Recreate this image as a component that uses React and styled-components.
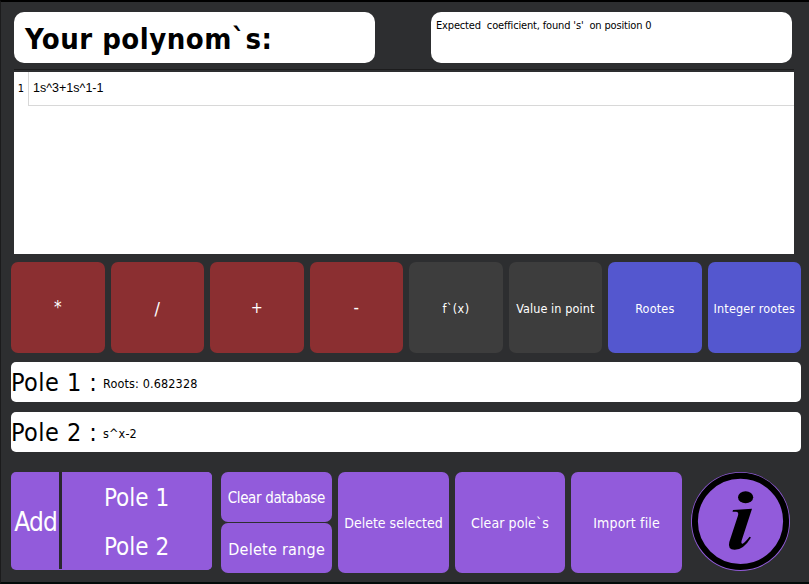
import React from "react";
import styled, { createGlobalStyle } from "styled-components";

const GlobalStyle = createGlobalStyle`
  * { box-sizing: border-box; }
  body { margin: 0; background: #2d2e30; overflow: hidden; }
  button { border: 0; padding: 0; margin: 0; }
`;

const Window = styled.main`
  width: 809px;
  height: 584px;
  display: flex;
  flex-direction: column;
  background: #2d2e30;
  border-top: 2px solid #000;
  border-left: 1px solid #1b1b1c;
  border-bottom: 2px solid #020a09;
  font-family: "DejaVu Sans Condensed", "DejaVu Sans", Tahoma, sans-serif;
  font-stretch: condensed;
  color: #000;
`;

const Label = styled.span`
  font-size: ${(p) => p.$size}px;
  letter-spacing: ${(p) => p.$track || 0}px;
  margin-right: ${(p) => -(p.$track || 0)}px;
  padding-top: ${(p) => 2 * (p.$drop || 0)}px;
  line-height: 1.2;
  white-space: pre;
`;

const Header = styled.header`
  display: flex;
  justify-content: space-between;
  margin: 10px 17px 0 13px;
  width: 778px;
`;

const Card = styled.div`
  width: 361px;
  height: 51px;
  border-radius: 10px;
  background: #fff;
`;

const TitleCard = styled(Card)`
  display: flex;
  align-items: center;
  padding-left: 11px;
  font-weight: 700;
`;

const MessageCard = styled(Card)`
  padding: 6px 5px;
  line-height: 16px;
  font-size: 11px;
`;

const List = styled.section`
  width: 780px;
  height: 185px;
  margin: 6px 0 0 13px;
  border-top: 1px solid #1c1c1d;
  padding-top: 2px;
  background: #fff content-box;
`;

const ListRow = styled.div`
  display: flex;
  height: 34px;
`;

const RowNumber = styled.div`
  width: 15px;
  display: flex;
  align-items: center;
  justify-content: center;
  border-right: 1px solid #d8d8d8;
`;

const RowValue = styled.div`
  flex: 1;
  display: flex;
  align-items: center;
  padding-left: 4px;
  border-bottom: 1px solid #d8d8d8;
  font-family: "Liberation Sans", Arial, sans-serif;
`;

const Operations = styled.div`
  display: grid;
  grid-template-columns: repeat(8, 1fr);
  gap: 6px;
  width: 790px;
  height: 91px;
  margin: 8px 0 0 10px;
`;

const tones = { red: "#8b2f31", gray: "#3d3d3d", blue: "#5457cf", purple: "#925bdb" };

const Button = styled.button`
  display: flex;
  align-items: center;
  justify-content: center;
  min-width: 0;
  font: inherit;
  color: #fff;
  background: ${(p) => tones[p.$tone]};
  border-radius: 7px;
`;

const Poles = styled.div`
  display: flex;
  flex-direction: column;
  gap: 10px;
  margin: 9px 0 0 10px;
`;

const PoleField = styled.div`
  width: 790px;
  height: 40px;
  display: flex;
  align-items: center;
  border-radius: 5px;
  background: #fff;
`;

const PoleName = styled.div`
  width: 92px;
  display: flex;
`;

const Footer = styled.footer`
  display: flex;
  align-items: flex-start;
  margin: 20px 0 0 10px;
`;

const AddGroup = styled.div`
  width: 201px;
  height: 98px;
  display: flex;
  margin-right: 9px;
  border-radius: 5px;
  overflow: hidden;
  background: #925bdb;
`;

const AddTitle = styled.div`
  width: 51px;
  height: 97px;
  display: flex;
  align-items: center;
  justify-content: center;
  padding-left: 2px;
  color: #fff;
  border-right: 3px solid #29272e;
`;

const AddTargets = styled.div`
  flex: 1;
  display: grid;
  grid-template-rows: 1fr 1fr;
`;

const Target = styled(Button)`
  border-radius: 0;
  padding-right: 1px;
`;

const Actions = styled.div`
  display: grid;
  grid-template-columns: 111px 111px 110px 111px;
  gap: 6px;
  height: 101px;
  margin-right: 9px;
`;

const Stack = styled.div`
  display: grid;
  grid-template-rows: 50px 50px;
  gap: 1px;
`;

const InfoButton = styled(Button)`
  width: 99px;
  height: 99px;
  border-radius: 50%;
`;

const operations = [
  { text: "*", tone: "red", size: 17 },
  { text: "/", tone: "red", size: 18, drop: 1 },
  { text: "+", tone: "red", size: 16 },
  { text: "-", tone: "red", size: 17 },
  { text: "f`(x)", tone: "gray", size: 12.5, track: 0.4, drop: 1 },
  { text: "Value in point", tone: "gray", size: 12.5, track: 0.1, drop: 1 },
  { text: "Rootes", tone: "blue", size: 12.5, track: 0.2, drop: 1 },
  { text: "Integer rootes", tone: "blue", size: 12.5, track: 0.15, drop: 1 },
];

const poles = [
  { name: "Pole 1 :", value: "Roots: 0.682328" },
  { name: "Pole 2 :", value: "s^x-2" },
];

function InfoIcon() {
  return (
    <svg width="99" height="99" viewBox="0 0 99 99" aria-hidden="true">
      <circle cx="49.5" cy="49.3" r="45.6" fill="none" stroke="#000" strokeWidth="6" />
      <ellipse cx="54.6" cy="25.3" rx="7.6" ry="6" />
      <path d="M42 38 L61 36.7 L50.5 69 Q49.8 72.5 52 71.5 Q54.5 70 58.5 64.7 L60 65.5 Q52.5 78 43.5 77.8 Q36.4 77.5 38.3 70 L47 43.5 Q48 40 45 39.8 L41.5 39.8 Z" />
    </svg>
  );
}

export default function App() {
  return (
    <>
      <GlobalStyle />
      <Window>
        <Header>
          <TitleCard>
            <Label $size={29} $track={0.5} $drop={2}>Your polynom`s:</Label>
          </TitleCard>
          <MessageCard>
            <Label $size={11} $track={-0.16}>{"Expected  coefficient, found 's'  on position 0"}</Label>
          </MessageCard>
        </Header>
        <List>
          <ListRow>
            <RowNumber><Label $size={11}>1</Label></RowNumber>
            <RowValue><Label $size={12.5}>1s^3+1s^1-1</Label></RowValue>
          </ListRow>
        </List>
        <Operations>
          {operations.map((o) => (
            <Button key={o.text} $tone={o.tone}>
              <Label $size={o.size} $track={o.track} $drop={o.drop}>{o.text}</Label>
            </Button>
          ))}
        </Operations>
        <Poles>
          {poles.map((p) => (
            <PoleField key={p.name}>
              <PoleName><Label $size={25} $track={0.45} $drop={1}>{p.name}</Label></PoleName>
              <Label $size={12.5} $track={0.15} $drop={1}>{p.value}</Label>
            </PoleField>
          ))}
        </Poles>
        <Footer>
          <AddGroup>
            <AddTitle><Label $size={26} $track={-0.8} $drop={2}>Add</Label></AddTitle>
            <AddTargets>
              <Target $tone="purple"><Label $size={24} $drop={2}>Pole 1</Label></Target>
              <Target $tone="purple"><Label $size={24} $drop={2}>Pole 2</Label></Target>
            </AddTargets>
          </AddGroup>
          <Actions>
            <Stack>
              <Button $tone="purple"><Label $size={15} $track={-0.35} $drop={1}>Clear database</Label></Button>
              <Button $tone="purple"><Label $size={16} $track={0.25} $drop={2}>Delete range</Label></Button>
            </Stack>
            <Button $tone="purple"><Label $size={14} $drop={1}>Delete selected</Label></Button>
            <Button $tone="purple"><Label $size={14} $track={0.1} $drop={1}>Clear pole`s</Label></Button>
            <Button $tone="purple"><Label $size={14} $track={0.15} $drop={1}>Import file</Label></Button>
          </Actions>
          <InfoButton $tone="purple" aria-label="Information"><InfoIcon /></InfoButton>
        </Footer>
      </Window>
    </>
  );
}
